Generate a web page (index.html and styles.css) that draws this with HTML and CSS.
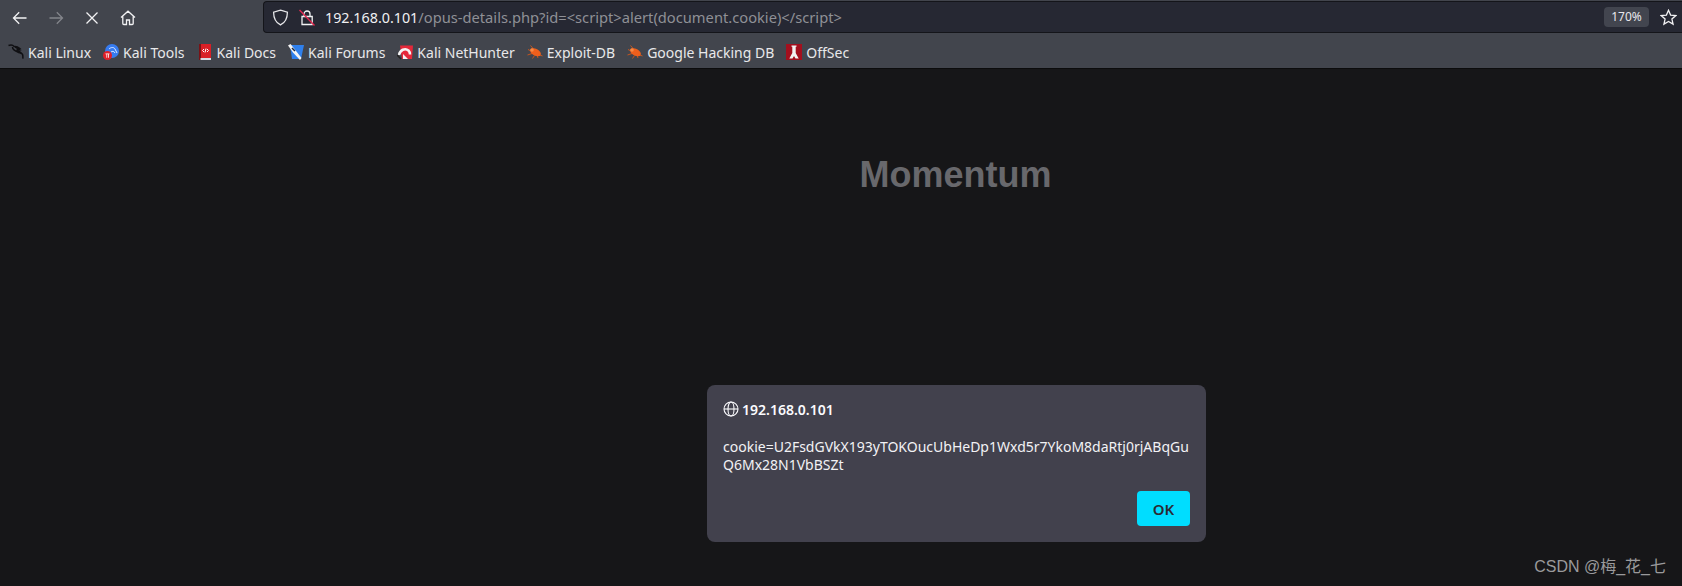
FILE: index.html
```html
<!DOCTYPE html>
<html>
	<head>
		<meta charset="utf-8">
		<title>Momentum</title>
		<link rel="stylesheet" href="styles.css">
	</head>
	<body>
		<svg class="sprites">
			<defs>
				<g id="bug">
					<path d="M3.500 1.500 7 5.500M1 5.500l4 2M0.500 11 5 9.500M5.500 14.500 7.500 11.500M11 14l-1-3M15.500 12l-4-1.500" fill="none" stroke="#c4561f" stroke-width="1"/>
					<ellipse cx="8.500" cy="8.300" rx="5.800" ry="3.400" transform="rotate(28 8.500 8.300)" fill="#ee5f1c"/>
					<circle cx="5" cy="6" r="1.800" fill="#f58a45"/>
				</g>
			</defs>
		</svg>

		<div class="toolbar">
			<div class="nav">
				<svg class="nav-icon arrow-back" viewBox="0 0 16 16"><path d="M14.500 8H1.500M7.200 2.300 1.500 8l5.700 5.700"/></svg>
				<svg class="nav-icon arrow-next" viewBox="0 0 16 16"><path d="M1.500 8H14.500M8.800 2.300 14.500 8l-5.700 5.700"/></svg>
				<svg class="nav-icon stop" viewBox="0 0 16 16"><path d="M2.500 2.500l11 11M13.500 2.500l-11 11"/></svg>
				<svg class="nav-icon home" viewBox="0 0 16 16"><path d="M1 7.500 8 1.200l7 6.300M2.800 6.500v7a1 1 0 0 0 1 1h2.700v-4.500h3v4.500h2.700a1 1 0 0 0 1-1v-7"/></svg>
			</div>
			<div class="urlbar">
				<svg class="shield" viewBox="0 0 16 16"><path d="M8 1 14.500 3c0 6-1.500 9.500-6.500 12C3 12.500 1.500 9 1.500 3z"/></svg>
				<svg class="lock" viewBox="0 0 16 17">
					<path class="lock-body" d="M5 7.500V5a3 3 0 0 1 6 0v2.500M3 7.500h10.200v8H3z"/>
					<path class="lock-slash" d="M0.500 1 15.500 16.500"/>
				</svg>
				<div class="url"><span class="host">192.168.0.101</span>/opus-details.php?id=&lt;script&gt;alert(document.cookie)&lt;/script&gt;</div>
				<div class="zoom-level">170%</div>
				<svg class="star" viewBox="0 0 16 16"><path d="M8 1.200l2 4.500 4.900.5-3.700 3.200 1.100 4.800L8 11.700l-4.300 2.500 1.100-4.800L1.100 6.200 6 5.700z"/></svg>
			</div>
		</div>

		<div class="bookmarks">
			<div class="bookmark">
				<svg class="fav" viewBox="0 0 16 16"><path class="dragon" d="M0.500 1.500C3 .5 5 1 6.200 2.600M6.200 2.600C8 2.400 10 3 11.500 4.300L9 4.200l2.500 1.700-3 .2c2 .8 5 2.300 6 4.300.5 1.200.5 2.500.3 4.300M14.800 10.500c-1.200-1-3-1.500-5-2.500C6.500 6.800 4.500 5 4.500 3"/></svg>
				<span>Kali Linux</span>
			</div>
			<div class="bookmark">
				<svg class="fav" viewBox="0 0 16 16">
					<circle cx="9" cy="7" r="7" fill="#367bf0"/>
					<path d="M6 5c2-2 5-2 6 0 1 1 1 3 2 4M8 8c1.500-1 3-1 4 1" fill="none" stroke="#dfeaff" stroke-width="1"/>
					<circle cx="4.500" cy="11.500" r="4.500" fill="#e0202a"/>
					<path d="M2.500 9.500h4v.8H5.800v3.500H5v-3.500h-.8v3.500h-.8v-3.500h-.9z" fill="#fff"/>
				</svg>
				<span>Kali Tools</span>
			</div>
			<div class="bookmark">
				<svg class="fav" viewBox="0 0 16 16">
					<path d="M2 0h12v14H2z" fill="#d91f26"/>
					<path d="M2 0h2v16H2z" fill="#7a1216"/>
					<path d="M3.500 14H14v2H3.500z" fill="#d8d8e0"/>
					<path d="M7 5 5.500 6.500 7 8M10 5l1.500 1.500L10 8M9 4.500 8 8.500" fill="none" stroke="#fff" stroke-width="1"/>
				</svg>
				<span>Kali Docs</span>
			</div>
			<div class="bookmark">
				<svg class="fav" viewBox="0 0 16 16">
					<path d="M2 1h14l-3 14H4z" fill="#2f80ed"/>
					<path d="M0 1.500 2.500 0l4 5 7 9-1.500 2-7-7.500z" fill="#f4f4f4"/>
					<path d="M4 4l3 3" stroke="#1b2a44" stroke-width="1.500"/>
				</svg>
				<span>Kali Forums</span>
			</div>
			<div class="bookmark">
				<svg class="fav" viewBox="0 0 16 16">
					<path d="M3 1.500h13l-1 13.500H5z" fill="#e5283a"/>
					<path d="M2 11C3 6 8 3.500 11.500 6.500c1 1 1.500 2.500 1.500 4" fill="none" stroke="#f4f4f4" stroke-width="2.500"/>
					<path d="M6 10l5 5H6z" fill="#f4f4f4"/>
					<path d="M0 11l4 4" stroke="#222" stroke-width="1.500"/>
				</svg>
				<span>Kali NetHunter</span>
			</div>
			<div class="bookmark">
				<svg class="fav" viewBox="0 0 16 16"><use href="#bug"/></svg>
				<span>Exploit-DB</span>
			</div>
			<div class="bookmark">
				<svg class="fav" viewBox="0 0 16 16"><use href="#bug"/></svg>
				<span>Google Hacking DB</span>
			</div>
			<div class="bookmark">
				<svg class="fav" viewBox="0 0 16 16">
					<path d="M0 0h16v16H0z" fill="#a30f1e"/>
					<path d="M5.500 1.500h5v1.300h-.8V9l3 5.500H9.500L8 12l-1.500 2.500H3.300l3-5.500V2.800h-.8z" fill="#f2f2f2"/>
				</svg>
				<span>OffSec</span>
			</div>
		</div>

		<div class="page">
			<h1 class="title">Momentum</h1>

			<div class="dialog">
				<div class="dialog-head">
					<svg class="globe" viewBox="0 0 16 16">
						<circle cx="8" cy="8" r="7"/>
						<ellipse cx="8" cy="8" rx="3" ry="7"/>
						<path d="M1 8h14"/>
					</svg>
					<span>192.168.0.101</span>
				</div>
				<div class="dialog-msg">cookie=U2FsdGVkX193yTOKOucUbHeDp1Wxd5r7YkoM8daRtj0rjABqGuQ6Mx28N1VbBSZt</div>
				<div class="dialog-foot">
					<button class="ok">OK</button>
				</div>
			</div>

			<div class="watermark">CSDN @梅_花_七</div>
		</div>
	</body>
</html>
```

FILE: styles.css
```css
* {margin:0; padding: 0; box-sizing: border-box;}

body {
	width: 1682px;
	height: 586px;
	overflow: hidden;
	background-color: #161618;
	font-family: "Noto Sans", "Noto Sans CJK SC", sans-serif;
}

.sprites {
	display: none;
}

.toolbar {
	height: 36px;
	padding-top: 1px;
	display: flex;
	background-color: #42454d;
}

.nav {
	width: 263px;
	height: 33px;
	padding-left: 12px;
	display: flex;
	align-items: center;
}

.nav-icon {
	width: 16px;
	height: 16px;
	fill: none;
	stroke: #f2f2f4;
	stroke-width: 1.300;
	margin-right: 20px;
}

.nav-icon.arrow-next {
	stroke: #83858b;
}

.nav-icon.home {
	margin-left: 2px;
}

.nav-icon.stop {
	margin-right: 18px;
}

.urlbar {
	flex: 1;
	height: 32px;
	display: flex;
	align-items: center;
	background-color: #262833;
	border: 1px solid #14151a;
	border-right: 0;
	border-radius: 4px 0 0 4px;
	padding-left: 8px;
}

.shield {
	width: 17px;
	height: 17px;
	fill: none;
	stroke: #e6e6e9;
	stroke-width: 1.200;
}

.lock {
	width: 16px;
	height: 17px;
	margin-left: 10px;
	fill: none;
}

.lock-body {
	stroke: #f2f2f4;
	stroke-width: 1.300;
}

.lock-slash {
	stroke: #e22850;
	stroke-width: 1.400;
}

.url {
	margin-left: 10px;
	flex: 1;
	font-size: 14.700px;
	color: #8f9096;
	white-space: nowrap;
}

.host {
	font-size: 14.300px;
	color: #f0f0f2;
}

.zoom-level {
	width: 45px;
	height: 20px;
	line-height: 20px;
	margin-right: 11px;
	text-align: center;
	font-size: 12px;
	color: #e8e8ec;
	background-color: #42454f;
	border-radius: 4px;
}

.star {
	width: 17px;
	height: 17px;
	margin-right: 5px;
	fill: none;
	stroke: #f2f2f4;
	stroke-width: 1.200;
}

.bookmarks {
	height: 33px;
	padding-left: 8px;
	display: flex;
	align-items: center;
	background-color: #42454d;
	border-bottom: 1px solid #0c0c0d;
}

.bookmark {
	display: flex;
	align-items: center;
	margin-right: 12px;
	font-size: 14px;
	color: #e8e8ea;
	white-space: nowrap;
}

.fav {
	width: 16px;
	height: 16px;
	margin-right: 4px;
	flex: none;
}

.dragon {
	fill: none;
	stroke: #101013;
	stroke-width: 1.500;
}

.page {
	position: relative;
	height: 517px;
	padding-left: 229px;
}

.title {
	padding-top: 85px;
	text-align: center;
	font-family: "Liberation Sans", sans-serif;
	font-size: 36px;
	font-weight: bold;
	line-height: 42px;
	color: #68686c;
}

.dialog {
	position: absolute;
	left: 707px;
	top: 316px;
	width: 499px;
	height: 157px;
	padding: 14px 16px 16px 16px;
	display: flex;
	flex-direction: column;
	background-color: #42414d;
	border-radius: 8px;
}

.dialog-head {
	display: flex;
	align-items: center;
	height: 20px;
	font-size: 14px;
	font-weight: 600;
	color: #fbfbfe;
}

.globe {
	width: 16px;
	height: 16px;
	margin-right: 3px;
	fill: none;
	stroke: #fbfbfe;
	stroke-width: 1.100;
}

.dialog-msg {
	margin-top: 19px;
	font-size: 14px;
	line-height: 18px;
	color: #f2f2f5;
	word-break: break-all;
}

.dialog-foot {
	margin-top: auto;
	display: flex;
	justify-content: flex-end;
}

.ok {
	width: 53px;
	height: 35px;
	border: 0;
	border-radius: 4px;
	background-color: #00ddff;
	color: #2b2a33;
	font-family: inherit;
	font-size: 15px;
	font-weight: 600;
}

.watermark {
	position: absolute;
	right: 16px;
	top: 488px;
	font-family: "Liberation Sans", "Noto Sans CJK SC", sans-serif;
	font-size: 16px;
	line-height: 20px;
	color: #9a9a9c;
}
```
